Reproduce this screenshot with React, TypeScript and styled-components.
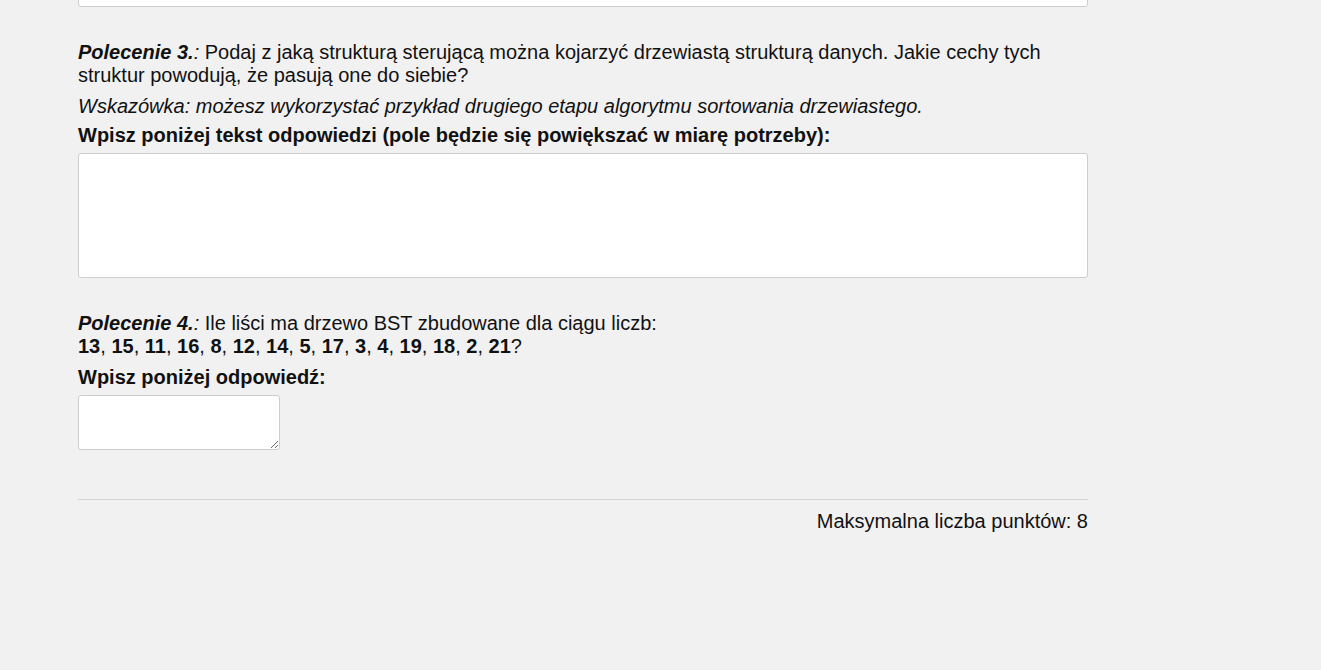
import React from "react";
import styled, { createGlobalStyle } from "styled-components";

const Global = createGlobalStyle`
  html, body { margin: 0; padding: 0; background: #f1f1f1; }
  body { font-family: "Liberation Sans", Arial, sans-serif; color: #111; overflow: hidden; }
`;

const Page = styled.div`
  width: 1010px;
  margin-left: 78px;
  font-size: 20px;
  line-height: 23px;
`;

const Answer = styled.textarea<{ $tall?: boolean; $small?: boolean; $resizable?: boolean }>`
  display: block;
  box-sizing: border-box;
  width: ${(p) => (p.$small ? "202px" : "100%")};
  height: ${(p) => (p.$tall ? "125px" : "55px")};
  margin: 0;
  padding: 4px 6px;
  border: 1px solid #cdcdcd;
  border-radius: 3px;
  background: #fff;
  font: inherit;
  resize: ${(p) => (p.$resizable ? "both" : "none")};
  outline: none;
`;

const TopAnswer = styled(Answer)`
  margin-top: -118px;
`;

const Task = styled.section`
  margin-top: 34px;
`;

const Prompt = styled.p`
  margin: 0;
`;

const Lead = styled.span`
  font-weight: bold;
  font-style: italic;
`;

const Colon = styled.i``;

const Hint = styled.p`
  margin: 8px 0 0;
  font-style: italic;
`;

const Label = styled.p<{ $gap: number }>`
  margin: ${(p) => p.$gap}px 0 6px;
  font-weight: bold;
`;

const Rule = styled.hr`
  margin: 49px 0 0;
  border: 0;
  border-top: 1px solid #d4d4d4;
`;

const Footer = styled.div`
  text-align: right;
  margin-top: 10px;
`;

const numbers = [13, 15, 11, 16, 8, 12, 14, 5, 17, 3, 4, 19, 18, 2, 21];

export default function App() {
  return (
    <>
      <Global />
      <Page>
        <TopAnswer $tall />
        <Task>
          <Prompt>
            <Lead>Polecenie 3.</Lead>
            <Colon>:</Colon> Podaj z jaką strukturą sterującą można kojarzyć drzewiastą strukturą danych. Jakie cechy tych
            struktur powodują, że pasują one do siebie?
          </Prompt>
          <Hint>Wskazówka: możesz wykorzystać przykład drugiego etapu algorytmu sortowania drzewiastego.</Hint>
          <Label $gap={6}>Wpisz poniżej tekst odpowiedzi (pole będzie się powiększać w miarę potrzeby):</Label>
          <Answer $tall />
        </Task>
        <Task>
          <Prompt>
            <Lead>Polecenie 4.</Lead>
            <Colon>:</Colon> Ile liści ma drzewo BST zbudowane dla ciągu liczb:
            <br />
            {numbers.map((n, i) => (
              <React.Fragment key={i}>
                <b>{n}</b>
                {i < numbers.length - 1 ? ", " : "?"}
              </React.Fragment>
            ))}
          </Prompt>
          <Label $gap={8}>Wpisz poniżej odpowiedź:</Label>
          <Answer $small $resizable />
        </Task>
        <Rule />
        <Footer>Maksymalna liczba punktów: 8</Footer>
      </Page>
    </>
  );
}
